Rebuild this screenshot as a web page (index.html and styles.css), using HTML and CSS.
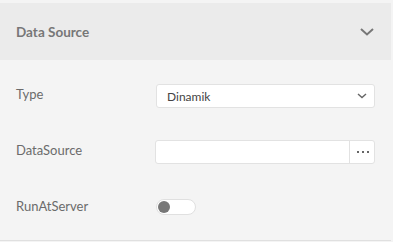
FILE: index.html
```html
<!DOCTYPE html>
<html lang="en">
<head>
    <meta charset="UTF-8">
    <meta name="viewport" content="width=device-width, initial-scale=1.0">
    <title>Data Source</title>
    <link rel="stylesheet" href="styles.css">
</head>
<body>
<div class="panel">
    <div class="panel-header">
        <span class="panel-title">Data Source</span>
        <svg class="chevron" width="14" height="8" viewBox="0 0 14 8"><path d="M1 1 L7 6.5 L13 1" fill="none" stroke="#777" stroke-width="2"/></svg>
    </div>
    <div class="panel-body">
        <div class="row">
            <label class="row-label">Type</label>
            <div class="select">
                <span>Dinamik</span>
                <svg width="10" height="6" viewBox="0 0 10 6"><path d="M1 1 L5 4.5 L9 1" fill="none" stroke="#666" stroke-width="1.4"/></svg>
            </div>
        </div>
        <div class="row">
            <label class="row-label">DataSource</label>
            <div class="input-group">
                <input type="text" class="input">
                <button class="dots"><span></span><span></span><span></span></button>
            </div>
        </div>
        <div class="row">
            <label class="row-label">RunAtServer</label>
            <div class="toggle"><span class="knob"></span></div>
        </div>
    </div>
</div>
</body>
</html>
```

FILE: styles.css
```css
body {
  font-family: Lato, "Open Sans", sans-serif;
  background-color: #f4f4f4;
  margin: 0;
  padding: 0;
}

.panel {
  margin: 3px 2px 0 0;
  border-bottom: 1px solid #e0e0e0;
}

.panel-header {
  height: 57px;
  background-color: #ebebeb;
  display: flex;
  align-items: center;
  justify-content: space-between;
  padding: 0 17px 0 16px;
}

.panel-title {
  font-size: 13.5px;
  font-weight: bold;
  color: #777;
}

.chevron {
  display: block;
}

.panel-body {
  padding: 24px 16px 20px 16px;
  display: flex;
  flex-direction: column;
  gap: 32px;
}

.row {
  display: flex;
  align-items: center;
  height: 24px;
}

.row-label {
  width: 140px;
  font-size: 13px;
  color: #6b6b6b;
  padding-bottom: 5px;
}

.select {
  flex: 1;
  height: 24px;
  box-sizing: border-box;
  background-color: white;
  border: 1px solid #e2e2e2;
  border-radius: 3px;
  display: flex;
  align-items: center;
  justify-content: space-between;
  padding: 0 7px 0 10px;
  font-size: 12px;
  color: #444;
}

.input-group {
  flex: 1;
  height: 24px;
  box-sizing: border-box;
  display: flex;
  background-color: white;
  border: 1px solid #e2e2e2;
  border-radius: 3px;
}

.input {
  flex: 1;
  border: none;
  outline: none;
  background: none;
  padding: 0 8px;
  min-width: 0;
}

.dots {
  width: 25px;
  border: none;
  border-left: 1px solid #e2e2e2;
  background: none;
  padding: 0 0 0 1px;
  display: flex;
  align-items: center;
  justify-content: center;
  gap: 3px;
}

.dots span {
  width: 2px;
  height: 2px;
  background-color: #666;
}

.toggle {
  width: 40px;
  height: 16px;
  box-sizing: border-box;
  background-color: white;
  border: 1px solid #e0e0e0;
  border-radius: 8px;
  display: flex;
  align-items: center;
  padding-left: 1px;
  margin-top: -2px;
}

.knob {
  width: 12px;
  height: 12px;
  border-radius: 50%;
  background-color: #777;
}
```
